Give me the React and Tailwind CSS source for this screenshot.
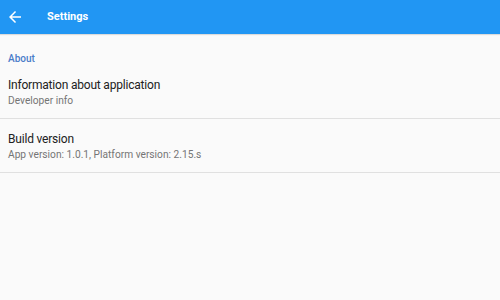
const items = [
  { title: 'Information about application', sub: 'Developer info' },
  { title: 'Build version', sub: 'App version: 1.0.1, Platform version: 2.15.s' },
];

function BackArrow() {
  return (
    <svg viewBox="0 0 24 24" className="w-[18px] h-[18px] fill-white">
      <path d="M20 11H7.83l5.59-5.59L12 4l-8 8 8 8 1.41-1.41L7.83 13H20v-2z" />
    </svg>
  );
}

export default function App() {
  return (
    <div className="w-[500px] h-[300px] bg-[#fafafa] font-['Roboto',sans-serif] overflow-hidden">
      <header className="h-[34px] bg-[#2196f3] flex items-center shadow-[0_1px_1px_rgba(0,0,0,0.12)]">
        <div className="ml-[6px]">
          <BackArrow />
        </div>
        <span className="ml-[23px] text-[11px] font-bold text-white">Settings</span>
      </header>

      <div className="pt-[18px] px-[8px] text-[10px] leading-[14px] font-medium text-[#4a7cc9]">About</div>

      {items.map((item, i) => (
        <div
          key={item.title}
          className={`border-b border-[#e0e0e0] pl-[8px] pb-[10px] ${i === 0 ? 'pt-[11px]' : 'pt-[12px]'}`}
        >
          <div className="text-[12px] leading-[16px] tracking-[-0.2px] text-[#212121]">{item.title}</div>
          <div className="text-[10.2px] leading-[15px] text-[#757575]">{item.sub}</div>
        </div>
      ))}
    </div>
  );
}
